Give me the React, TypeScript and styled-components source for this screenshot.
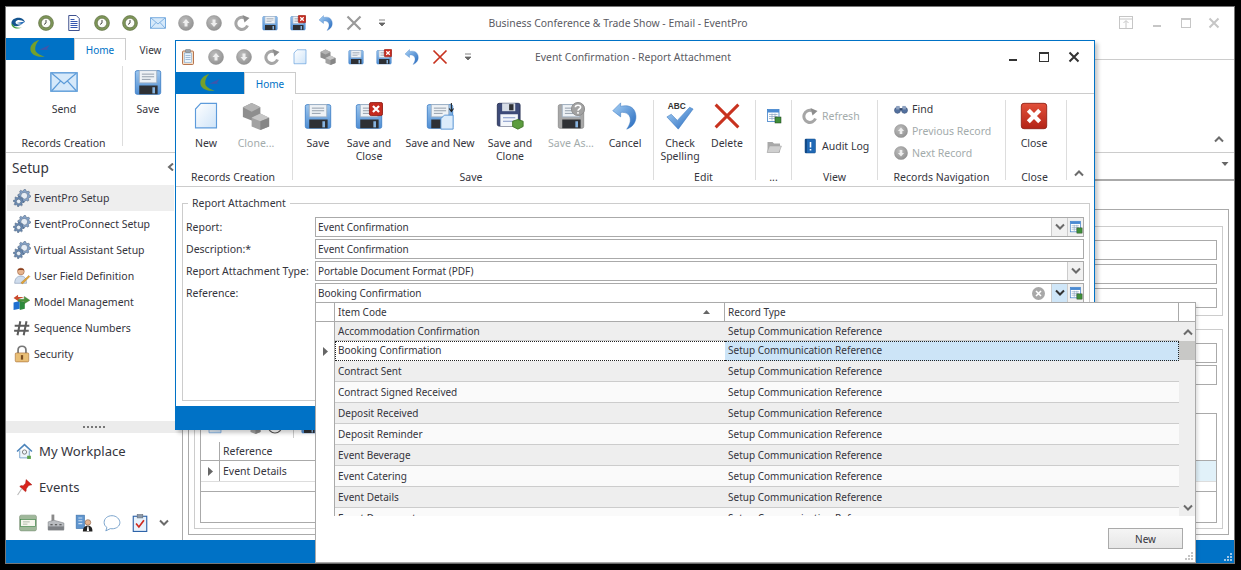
import React from "react";
import styled, { createGlobalStyle } from "styled-components";

const BLUE = "#0072c6";
const INK = "#35353d";
const MUTED = "#a3abab";

const GlobalStyle = createGlobalStyle`
  html, body {
    margin: 0;
    padding: 0;
    background: #000;
  }
  * {
    box-sizing: border-box;
  }
  body {
    font-family: "Noto Sans", "Open Sans", sans-serif;
    font-size: 10.5px;
    color: ${INK};
  }
`;

const Stage = styled.div`
  position: relative;
  width: 1241px;
  height: 570px;
  padding: 6px 6px 6px 5px;
  overflow: hidden;
  background: #000;
`;

const Window = styled.div`
  display: flex;
  flex-direction: column;
  width: 1230px;
  height: 558px;
  border: 1px solid #777;
  background: #fff;
`;

const TitleBar = styled.div`
  display: grid;
  grid-template-columns: 1fr auto 1fr;
  align-items: center;
  flex: none;
  height: 31px;
`;

const QuickAccess = styled.div`
  display: flex;
  align-items: center;
  gap: 12px;
  padding-left: 4px;
`;

const Title = styled.div`
  margin-right: 4px;
  color: #5a5a62;
  font-size: 10.4px;
  white-space: nowrap;
`;

const WindowButtons = styled.div<{ $gap: number; $right: number }>`
  display: flex;
  justify-content: flex-end;
  align-items: center;
  gap: ${({ $gap }) => $gap}px;
  padding-right: ${({ $right }) => $right}px;
`;

const PinSlot = styled.div`
  display: flex;
  margin-right: 3px;
`;

const TabRow = styled.div`
  display: flex;
  flex: none;
  height: 22px;
  border-bottom: 1px solid #ccc;
`;

const AppButton = styled.div`
  display: flex;
  align-items: center;
  justify-content: center;
  width: 68px;
  height: 22px;
  background: ${BLUE};
`;

const Tab = styled.div<{ $active?: boolean; $width: number }>`
  display: flex;
  align-items: center;
  justify-content: center;
  width: ${({ $width }) => $width}px;
  height: 22px;
  color: ${({ $active }) => ($active ? BLUE : INK)};
  background: #fff;
  border: 1px solid ${({ $active }) => ($active ? "#ccc" : "transparent")};
  border-bottom: 0;
  font-size: 10px;
`;

const Ribbon = styled.div`
  display: flex;
  flex: none;
  height: 93px;
  border-bottom: 1px solid #ccc;
`;

const Group = styled.div<{ $width: number; $last?: boolean }>`
  display: flex;
  flex-direction: column;
  flex: none;
  width: ${({ $width }) => $width}px;
  height: 80px;
  margin-top: 6px;
  padding-top: 2px;
  border-right: 1px solid ${({ $last }) => ($last ? "transparent" : "#ddd")};
`;

const GroupBody = styled.div<{ $left?: number }>`
  display: flex;
  flex: 1;
  min-height: 0;
  padding-left: ${({ $left }) => $left ?? 0}px;
`;

const GroupCaption = styled.div<{ $right?: number }>`
  margin-bottom: -4px;
  padding-right: ${({ $right }) => $right ?? 0}px;
  text-align: center;
  line-height: 14px;
  white-space: nowrap;
`;

const LargeButton = styled.div<{ $width: number; $disabled?: boolean }>`
  display: flex;
  flex-direction: column;
  align-items: center;
  flex: none;
  width: ${({ $width }) => $width}px;
  color: ${({ $disabled }) => ($disabled ? MUTED : INK)};
  line-height: 13px;
  text-align: center;
  white-space: nowrap;
`;

const LargeLabel = styled.div`
  margin-top: 7px;
`;

const SmallStack = styled.div<{ $rowHeight: number; $left: number; $gap: number }>`
  display: flex;
  flex-direction: column;
  justify-content: center;
  height: 58px;
  padding-left: ${({ $left }) => $left}px;

  & > div {
    display: flex;
    align-items: center;
    flex: none;
    gap: ${({ $gap }) => $gap}px;
    height: ${({ $rowHeight }) => $rowHeight}px;
    white-space: nowrap;
  }
`;

const SmallLabel = styled.span<{ $disabled?: boolean }>`
  color: ${({ $disabled }) => ($disabled ? MUTED : INK)};
`;

const CollapseSlot = styled.div<{ $right: number }>`
  display: flex;
  align-items: flex-end;
  justify-content: flex-end;
  flex: 1;
  height: 86px;
  padding: 0 ${({ $right }) => $right}px 3px 0;
`;

const Body = styled.div`
  display: flex;
  flex: 1;
  min-height: 0;
`;

const Sidebar = styled.div`
  display: flex;
  flex-direction: column;
  flex: none;
  width: 177px;
  border-right: 1px solid #aaa;
`;

const SidebarHeader = styled.div`
  display: flex;
  align-items: center;
  justify-content: space-between;
  height: 30px;
  padding: 0 6px 2px;
  font-size: 13.6px;
`;

const NavList = styled.div`
  flex: 1;
  padding-top: 2px;
`;

const NavItem = styled.div<{ $active?: boolean }>`
  display: flex;
  align-items: center;
  gap: 3px;
  width: 167px;
  height: 26px;
  margin-left: 1px;
  padding-left: 6px;
  background: ${({ $active }) => ($active ? "#eee" : "transparent")};
`;

const Splitter = styled.div`
  display: flex;
  align-items: center;
  justify-content: center;
  gap: 2px;
  height: 12px;
  background: #ececec;

  & > i {
    width: 2px;
    height: 2px;
    background: #777;
  }
`;

const BigNav = styled.div`
  display: flex;
  align-items: center;
  gap: 6px;
  height: 36px;
  padding-left: 10px;
  font-size: 13.1px;
`;

const ShortcutBar = styled.div`
  display: flex;
  align-items: center;
  gap: 10px;
  height: 35px;
  padding-left: 13px;
`;

const Content = styled.div`
  display: flex;
  flex-direction: column;
  flex: 1;
  min-width: 0;
`;

const ContentStrip = styled.div`
  display: flex;
  align-items: center;
  justify-content: flex-end;
  flex: none;
  height: 28px;
  padding: 0 5px 4px 0;
  border-bottom: 2px solid #aaa;
`;

const ContentArea = styled.div`
  flex: 1;
  min-height: 0;
  padding: 28px 5px 5px;
  display: flex;
`;

const OuterFrame = styled.div`
  display: flex;
  flex-direction: column;
  flex: 1;
  gap: 13px;
  padding: 16px 5px 5px;
  border: 1px solid #aaa;
`;

const UpperFrame = styled.div`
  display: flex;
  flex-direction: column;
  flex: none;
  gap: 4px;
  height: 90px;
  padding: 13px 5px 0;
  border: 1px solid #ccc;
`;

const LowerFrame = styled.div`
  display: flex;
  flex-direction: column;
  flex: 1;
  gap: 2px;
  padding: 13px 5px 5px;
  border: 1px solid #ccc;
`;

const BackField = styled.div`
  flex: none;
  height: 20px;
  border: 1px solid #aaa;
  background: #fff;
`;

const GridBox = styled.div`
  display: flex;
  flex-direction: column;
  flex: none;
  height: 110px;
  margin-top: auto;
  border: 1px solid #aaa;
`;

const GridToolbar = styled.div`
  display: flex;
  align-items: flex-start;
  flex: none;
  height: 28px;
  padding: 4px 0 0 6px;

  & > svg:nth-child(2) {
    margin-left: 22px;
  }
  & > svg:nth-child(3) {
    margin-left: 6px;
  }
`;

const GridToolbarRule = styled.span`
  width: 1px;
  height: 20px;
  margin: 0 7px 0 10px;
  background: #ccc;
`;

const GridLine = styled.div<{ $height: number; $rule: string }>`
  display: flex;
  flex: none;
  height: ${({ $height }) => $height}px;
  border-bottom: 1px solid ${({ $rule }) => $rule};
`;

const Indicator = styled.div<{ $width: number }>`
  display: flex;
  align-items: center;
  justify-content: center;
  flex: none;
  width: ${({ $width }) => $width}px;
  border-right: 1px solid #aaa;
`;

const GridCell = styled.div<{ $width?: number; $tint?: string }>`
  display: flex;
  align-items: center;
  flex: ${({ $width }) => ($width ? "none" : 1)};
  width: ${({ $width }) => ($width ? `${$width}px` : "auto")};
  padding-left: 3px;
  background: ${({ $tint }) => $tint ?? "transparent"};
`;

const BlankArea = styled.div<{ $height: number }>`
  flex: none;
  height: ${({ $height }) => $height}px;
  border-bottom: 1px solid #aaa;
`;

const Footer = styled.div`
  position: relative;
  flex: none;
  height: 23px;
  background: ${BLUE};
`;

const Grip = styled.svg`
  position: absolute;
  right: 1px;
  bottom: 1px;
`;

const Dialog = styled.div`
  position: absolute;
  left: 175px;
  top: 40px;
  display: flex;
  flex-direction: column;
  width: 920px;
  height: 390px;
  border: 1px solid ${BLUE};
  background: #fff;
  box-shadow: 3px 3px 4px rgba(0, 0, 0, 0.22);
`;

const DialogBody = styled.div`
  display: flex;
  flex: 1;
  min-height: 0;
  padding: 9px 4px 5px 6px;
`;

const FieldSet = styled.fieldset`
  flex: 1;
  min-width: 0;
  margin: 0;
  padding: 0 5px 0 3px;
  border: 1px solid #ccc;
`;

const Legend = styled.legend`
  margin-left: 2px;
  padding: 0 4px;
  line-height: 14px;
`;

const Form = styled.div`
  display: flex;
  flex-direction: column;
  gap: 2px;
  margin-top: 7px;
`;

const FormRow = styled.div`
  display: grid;
  grid-template-columns: 129px 1fr;
  align-items: center;
  height: 20px;
`;

const FormLabel = styled.label`
  white-space: nowrap;
`;

const Field = styled.div`
  display: flex;
  align-items: stretch;
  height: 20px;
  border: 1px solid #aaa;
  background: #fff;
  font-size: 10px;
`;

const FieldText = styled.div`
  flex: 1;
  padding-left: 2px;
  line-height: 18px;
`;

const FieldButton = styled.div<{ $active?: boolean }>`
  display: flex;
  align-items: center;
  justify-content: center;
  width: 16px;
  border-left: 1px solid #ccc;
  background: ${({ $active }) => ($active ? "#cfe6f8" : "#f1f1f1")};
`;

const ClearSlot = styled.div`
  display: flex;
  align-items: center;
  width: 19px;
`;

const Popup = styled.div`
  position: absolute;
  left: 315px;
  top: 302px;
  display: flex;
  flex-direction: column;
  width: 881px;
  height: 261px;
  border: 1px solid #aaa;
  background: #fff;
  box-shadow: 2px 2px 3px rgba(0, 0, 0, 0.12);
  font-size: 10px;
`;

const PopupHeader = styled.div`
  display: grid;
  grid-template-columns: 19px 390px 454px 16px;
  flex: none;
  height: 19px;
  border-bottom: 1px solid #aaa;
`;

const HeaderCell = styled.div`
  display: flex;
  align-items: center;
  justify-content: space-between;
  padding: 0 13px 1px 3px;
  border-right: 1px solid #aaa;
`;

const PopupBody = styled.div`
  display: flex;
  flex: none;
  height: 194px;
  overflow: hidden;
`;

const Rows = styled.div`
  flex: none;
  width: 863px;
`;

const Row = styled.div<{ $height: number; $even?: boolean }>`
  display: grid;
  grid-template-columns: 19px 390px 454px;
  height: ${({ $height }) => $height}px;

  & > div + div {
    background: ${({ $even }) => ($even ? "#fafafa" : "#eee")};
    border-bottom: 1px solid #ccc;
  }
`;

const RowMark = styled.div`
  display: flex;
  align-items: center;
  justify-content: center;
  border-right: 1px solid #aaa;
`;

const RowCell = styled.div`
  display: flex;
  align-items: center;
  padding: 0 0 1px 3px;
  white-space: nowrap;
`;

const SelectedRow = styled(Row)`
  & > div + div {
    border: 1px dotted #222;
    padding-bottom: 2px;
  }
  & > div:nth-child(2) {
    background: #fff;
    border-right: 0;
    padding-left: 2px;
  }
  & > div:nth-child(3) {
    background: #cce4f7;
    border-left: 0;
    padding-left: 3px;
  }
`;

const ScrollRail = styled.div`
  display: flex;
  flex-direction: column;
  align-items: center;
  flex: none;
  width: 17px;
  background: #eee;
`;

const ScrollEnd = styled.div<{ $height: number }>`
  display: flex;
  align-items: center;
  justify-content: center;
  height: ${({ $height }) => $height}px;
`;

const ScrollThumb = styled.div`
  width: 100%;
  height: 19px;
  background: #c8c8c6;
`;

const ScrollSpace = styled.div`
  flex: 1;
`;

const PopupFooter = styled.div`
  position: relative;
  display: flex;
  justify-content: flex-end;
  flex: 1;
  padding: 12px 12px 0 0;
`;

const PlainButton = styled.div`
  display: flex;
  align-items: center;
  justify-content: center;
  width: 75px;
  height: 21px;
  border: 1px solid #aaa;
  background: linear-gradient(#f5f5f5, #e6e6e6);
`;

const Defs = styled.svg`
  position: absolute;
  width: 0;
  height: 0;
`;

const Floppy = ({ tone = "url(#fl)", edge = "#3f7fc6" }: { tone?: string; edge?: string }) => (
  <>
    <rect x="1.5" y="3" width="29" height="27" rx="2" fill={tone} stroke={edge} />
    <rect x="6" y="3" width="20" height="14" fill="#eef2f6" stroke="#9fb0c2" />
    <path d="M9 7h14M9 10h14M9 13h10" stroke="#8792a0" strokeWidth="1" />
    <rect x="6" y="20" width="21" height="10" fill="#2e3034" />
    <rect x="21" y="22" width="3" height="7" fill="#86b3df" />
  </>
);

const CloseBadge = () => (
  <>
    <rect x="16.5" y="0.5" width="15" height="15" rx="2" fill="#c52a1e" stroke="#8e1c13" />
    <path d="M20.5 4.5l7 7M27.5 4.5l-7 7" stroke="#fff" strokeWidth="2.6" />
  </>
);

const gearPath = (cx: number, cy: number, outer: number, inner: number, teeth: number) => {
  const points: string[] = [];
  const step = (Math.PI * 2) / (teeth * 4);
  for (let i = 0; i < teeth * 4; i++) {
    const r = i % 4 < 2 ? outer : inner;
    const x = cx + r * Math.cos(i * step);
    const y = cy + r * Math.sin(i * step);
    points.push(`${x.toFixed(1)} ${y.toFixed(1)}`);
  }
  return `M${points.join("L")}Z`;
};

const Gear = ({ cx, cy, r, fill }: { cx: number; cy: number; r: number; fill: string }) => (
  <>
    <path d={gearPath(cx, cy, r, r - 2.6, 8)} fill={fill} stroke="#3b506c" strokeWidth=".8" />
    <circle cx={cx} cy={cy} r={r - 5.5} fill="#e6edf5" stroke="#3b506c" strokeWidth=".8" />
  </>
);

const glyphs: Record<string, React.ReactNode> = {
  brand: (
    <>
      <path d="M3 17C2 9 12 4 21 6c4 1 8 4 9 9-6-5-13-6-17-4 2-2 5-2 7-1-6-1-11 3-8 7 2 2 6 3 12 1-5 5-19 7-21-1z" fill="#15558f" />
      <path d="M3 17c-1 8 10 13 21 8-8 1-14 0-17-4-1-1-2-3-4-4z" fill="#3f9a3a" />
      <path d="M13 16l17-3-6 5z" fill="#1c66b5" />
    </>
  ),
  logo: (
    <>
      <path d="M15 3C7 5 2 10 2 16c0 8 10 13 21 11C15 25 9 21 9 16c0-5 2-9 6-13z" fill="#74a02c" />
      <path d="M15 17l15-7-4 6 3 1z" fill="#3f55ab" />
    </>
  ),
  clock: (
    <>
      <circle cx="16" cy="16" r="15" fill="#7d9558" stroke="#505f34" />
      <circle cx="16" cy="16" r="9.5" fill="#fbfcf8" stroke="#47512f" />
      <path d="M16 10v6l-4 3" fill="none" stroke="#333" strokeWidth="1.8" />
    </>
  ),
  history: (
    <>
      <circle cx="16" cy="16" r="14" fill="#fff" stroke="#555" strokeWidth="2.4" />
      <path d="M16 8v8l-4 4" fill="none" stroke="#555" strokeWidth="2.4" />
    </>
  ),
  doc: (
    <>
      <path d="M5.5 1h15l6 6v24h-21z" fill="#fff" stroke="#2b3f82" strokeWidth="1.8" />
      <path d="M9 9h8M9 13h14M9 17h14M9 21h14M9 25h14" stroke="#3557b0" strokeWidth="2" />
    </>
  ),
  mail: (
    <>
      <rect x="1" y="5.5" width="30" height="21" fill="#d6e9fa" stroke="#5c9bd8" strokeWidth="1.6" />
      <path d="M2 6l14 12L30 6M2 26l10-11M30 26L20 15" fill="none" stroke="#5c9bd8" strokeWidth="1.4" />
    </>
  ),
  up: (
    <>
      <circle cx="16" cy="16" r="15" fill="url(#grayball)" stroke="#8f8f8f" />
      <path d="M16 8l7 8h-4v7h-6v-7H9z" fill="#eee" />
    </>
  ),
  down: (
    <>
      <circle cx="16" cy="16" r="15" fill="url(#grayball)" stroke="#8f8f8f" />
      <path d="M16 24l7-8h-4V9h-6v7H9z" fill="#eee" />
    </>
  ),
  refresh: (
    <>
      <path d="M27 21A12 12 0 1 1 20 5.5" fill="none" stroke="#a6a6a6" strokeWidth="6" />
      <path d="M17 0l14 6-10 9z" fill="#8d8d8d" />
    </>
  ),
  save: <Floppy />,
  saveClose: (
    <>
      <Floppy />
      <CloseBadge />
    </>
  ),
  saveNew: (
    <>
      <Floppy />
      <path d="M21 15h10v16H17V19z" fill="#dcecfb" stroke="#4d8fd2" />
      <path d="M29 1v9M26.5 7.5l2.5 3.5 2.5-3.5" fill="none" stroke="#222" strokeWidth="1.2" />
    </>
  ),
  saveClone: (
    <>
      <rect x="1.5" y="1.5" width="26" height="26" rx="2" fill="#3d4a78" stroke="#283154" />
      <rect x="7" y="1.5" width="15" height="9" fill="#d7dde6" />
      <rect x="15" y="2.5" width="5" height="7" fill="#2e3034" />
      <rect x="5" y="14" width="20" height="13.5" fill="#f3f6fa" />
      <path d="M8 18h14M8 22h14" stroke="#6f86c0" />
      <path d="M19 22l6-2 6 2v6l-6 3-6-3z" fill="#5c9c3f" stroke="#3f7427" />
    </>
  ),
  saveAs: (
    <>
      <Floppy tone="#a8a8a8" edge="#8e8e8e" />
      <circle cx="24" cy="8" r="7.5" fill="#a2a2a2" stroke="#888" />
      <path d="M21 6c0-3 6-3 6 0 0 2-3 2-3 4M24 11.5v2" fill="none" stroke="#fff" strokeWidth="1.8" />
    </>
  ),
  undo: (
    <path d="M11 1L2 10l9 7v-5c7-1 12 3 11 10-.4 3-2 6-4 9 8-3 12-10 10-18C26 5 19 3 11 5z" fill="url(#undo)" stroke="#3a78c2" strokeWidth=".6" />
  ),
  xRed: <path d="M3 3l26 26M29 3L3 29" stroke="#c8321f" strokeWidth="3.4" />,
  xGray: <path d="M3 3l26 26M29 3L3 29" stroke="#9a9a9a" strokeWidth="4.4" />,
  clipboard: (
    <>
      <rect x="5" y="4" width="22" height="27" rx="2" fill="#f4ddc6" stroke="#a4562a" strokeWidth="1.6" />
      <rect x="9" y="8" width="14" height="19" fill="#e8f3fc" stroke="#6a9ed2" />
      <rect x="11" y="1" width="10" height="6" rx="1" fill="#9aa3ac" stroke="#6d747b" />
      <path d="M11 13h10M11 17h10M11 21h10" stroke="#5d87b6" />
    </>
  ),
  newDoc: <path d="M10 1.5h18v28H4V8z" fill="url(#paper)" stroke="#5d9bdb" strokeWidth="1.3" />,
  clone: (
    <>
      <path d="M1 6l10-5 10 5v11l-10 4-10-4z" fill="#8e8e8e" />
      <path d="M11 11L1 6l10-5 10 5z" fill="#b4b4b4" />
      <path d="M11 18l10-5 10 5v10l-10 4-10-4z" fill="#a2a2a2" />
      <path d="M21 22l-10-4 10-5 10 5z" fill="#c6c6c6" />
      <path d="M21 22v10l10-4V18z" fill="#868686" />
    </>
  ),
  check: (
    <>
      <text x="2" y="8" fontFamily="Liberation Sans, sans-serif" fontWeight="700" fontSize="9.5" fill="#333">ABC</text>
      <path d="M1 17l5-3 7 7L27 6l4 2-17 23z" fill="url(#undo)" stroke="#3a78c2" strokeWidth=".6" />
    </>
  ),
  closeBig: (
    <>
      <rect x="1.5" y="1.5" width="29" height="29" rx="3" fill="url(#redbox)" stroke="#8f1f15" />
      <path d="M9.5 9.5l13 13M22.5 9.5l-13 13" stroke="#fff" strokeWidth="4.8" />
    </>
  ),
  table: (
    <>
      <rect x="3" y="3" width="23" height="24" fill="#fff" stroke="#3e7fc8" strokeWidth="1.6" />
      <rect x="3" y="3" width="23" height="6" fill="#4a8ad2" />
      <path d="M6 13h17M6 17h17M6 21h17M12 11v14M18 11v14" stroke="#8aa4c0" strokeWidth="1.4" />
      <rect x="18" y="18" width="12" height="12" fill="#3f8f3a" stroke="#1e3d1a" />
    </>
  ),
  folder: (
    <>
      <path d="M3 8h10l3 3h12v18H3z" fill="#a9a9a9" />
      <path d="M2 29l5-13h24l-5 13z" fill="#cfcfcf" stroke="#a0a0a0" />
    </>
  ),
  audit: (
    <>
      <rect x="6" y="2" width="21" height="28" rx="2" fill="#1f68b5" stroke="#134a86" />
      <rect x="6" y="2" width="4" height="28" fill="#134a86" />
      <path d="M17 8v11" stroke="#fff" strokeWidth="3.2" />
      <path d="M17 22v3" stroke="#fff" strokeWidth="3.2" />
    </>
  ),
  binoculars: (
    <>
      <circle cx="8" cy="19" r="7" fill="#53709e" stroke="#34496e" />
      <circle cx="24" cy="19" r="7" fill="#53709e" stroke="#34496e" />
      <rect x="5" y="9" width="8" height="8" fill="#8da1c0" />
      <rect x="19" y="9" width="8" height="8" fill="#8da1c0" />
      <rect x="13" y="14" width="6" height="5" fill="#34496e" />
    </>
  ),
  gears: (
    <>
      <Gear cx={20} cy={12} r={11.5} fill="#86a3c8" />
      <Gear cx={10} cy={22} r={9.5} fill="#6a8ab2" />
    </>
  ),
  user: (
    <>
      <circle cx="14" cy="8" r="6" fill="#e6b48e" stroke="#9b5f3a" />
      <path d="M8 6c1-5 11-5 12 0-4-1-8-1-12 0z" fill="#8a3f1f" />
      <path d="M3 29c0-9 5-13 11-13s10 4 10 13z" fill="#cfdcec" stroke="#7d93ae" />
      <path d="M14 28l14-13 2 2-13 13z" fill="#e2a53a" stroke="#a8721d" strokeWidth=".7" />
    </>
  ),
  model: (
    <>
      <path d="M1 17l11-3v14L1 30z" fill="#1f6fd0" />
      <path d="M12 14l9 2v12l-9 2z" fill="#2d8a3c" />
      <path d="M9 11h11V6l10 7-10 6v-4H9z" fill="#49933a" stroke="#2c6122" strokeWidth=".6" />
      <path d="M20 7H9V3L1 9l8 5v-3" fill="#ca4a2c" />
    </>
  ),
  hash: <path d="M13 4L8 29M24 4l-5 25M3 12h26M2 21h26" stroke="#5c5c5c" strokeWidth="3.6" />,
  lock: (
    <>
      <path d="M9 15V9c0-9 14-9 14 0v6" fill="none" stroke="#777" strokeWidth="3" />
      <rect x="4" y="14" width="24" height="16" rx="2" fill="#e9bf77" stroke="#a1642a" />
      <rect x="14" y="18" width="4" height="8" fill="#7a4d22" />
    </>
  ),
  home: (
    <>
      <path d="M2 16L16 3l14 13" fill="none" stroke="#4c84bb" strokeWidth="3" />
      <path d="M7 14v14h18V14" fill="#eef5fb" stroke="#6a9ac7" strokeWidth="1.6" />
      <circle cx="16" cy="17" r="4" fill="none" stroke="#5d5d5d" strokeWidth="1.4" />
      <rect x="21" y="24" width="7" height="6" fill="#5aa24a" />
    </>
  ),
  pin: (
    <>
      <path d="M19 1l11 10-6 1-5 7c1 2 0 4-1 5L7 14c2-2 4-2 6-1l5-5z" fill="#d8231c" stroke="#9a1610" strokeWidth=".8" />
      <path d="M11 18L3 30" stroke="#b9b9b9" strokeWidth="2" />
    </>
  ),
  card: (
    <>
      <rect x="1" y="2" width="30" height="28" rx="3" fill="#9fb89a" stroke="#7a8f76" />
      <rect x="3" y="10" width="26" height="12" fill="#f6f6ee" stroke="#2f7a3a" />
      <path d="M7 14h12M7 18h8" stroke="#7a8f76" />
    </>
  ),
  factory: (
    <>
      <rect x="8" y="1" width="5" height="14" fill="#8a8a8a" />
      <path d="M2 14l10-3 18 5v12H2z" fill="#b9bcc0" stroke="#7d8084" />
      <rect x="2" y="22" width="28" height="7" fill="#7d8084" />
      <path d="M6 19h4M14 19h4M22 19h4" stroke="#444" strokeWidth="2" />
    </>
  ),
  people: (
    <>
      <rect x="2" y="2" width="15" height="24" fill="#5f95cf" stroke="#3c6ea4" />
      <path d="M6 7h7M6 12h7M6 17h7" stroke="#c9def2" strokeWidth="2" />
      <circle cx="23" cy="15" r="5" fill="#e6b48e" stroke="#80563b" />
      <path d="M14 31c0-7 4-10 9-10s8 3 8 10z" fill="#222" />
      <path d="M22 22h2l1 8h-4z" fill="#fff" />
    </>
  ),
  bubble: (
    <path d="M16 3C8 3 2 8 2 15c0 4 2 7 5 9l-2 6 8-4c1 .3 2 .3 3 .3 8 0 14-5 14-11S24 3 16 3z" fill="#fff" stroke="#6e9bc7" strokeWidth="1.6" />
  ),
  todo: (
    <>
      <rect x="4" y="4" width="24" height="27" fill="#e8f2fc" stroke="#2e63a8" strokeWidth="2" />
      <rect x="11" y="1" width="10" height="6" fill="#8d99a8" stroke="#5e6977" />
      <path d="M9 17l5 6 9-12" fill="none" stroke="#cf2a20" strokeWidth="3" />
    </>
  ),
};

const Icon = ({ name, size = 16 }: { name: string; size?: number }) => (
  <svg width={size} height={size} viewBox="0 0 32 32" style={{ flex: "none" }}>
    {glyphs[name]}
  </svg>
);

const chevronPaths = {
  up: "M1 6.5l4-4 4 4",
  down: "M1 1.5l4 4 4-4",
  left: "M7 0.5l-4 3.5 4 3.5",
};

const Chevron = ({ dir = "down", color = "#6b6b6b" }: { dir?: keyof typeof chevronPaths; color?: string }) => (
  <svg width="10" height="8" viewBox="0 0 10 8">
    <path d={chevronPaths[dir]} fill="none" stroke={color} strokeWidth="2" />
  </svg>
);

const Caret = ({ width = 7, up }: { width?: number; up?: boolean }) => (
  <svg width={width} height="6" viewBox="0 0 7 6">
    <path d={up ? "M0 5h7L3.5 1z" : "M0 1h7L3.5 5z"} fill="#666" />
  </svg>
);

const QuickCaret = () => (
  <svg width="16" height="16" viewBox="0 0 16 16">
    <path d="M5 5h6M5 8h6l-3 3z" fill="#666" stroke="#666" strokeWidth=".8" />
  </svg>
);

const RowArrow = () => (
  <svg width="5" height="9" viewBox="0 0 5 9">
    <path d="M0 0l5 4.5L0 9z" fill="#666" />
  </svg>
);

const CtlMin = ({ c }: { c: string }) => (
  <svg width="12" height="12" viewBox="0 0 12 12">
    <rect x="1" y="8" width="8" height="2" fill={c} />
  </svg>
);

const CtlMax = ({ c }: { c: string }) => (
  <svg width="12" height="12" viewBox="0 0 12 12">
    <rect x="1.5" y="1.5" width="9" height="9" fill="none" stroke={c} />
    <rect x="1" y="1" width="10" height="2" fill={c} />
  </svg>
);

const CtlClose = ({ c }: { c: string }) => (
  <svg width="12" height="12" viewBox="0 0 12 12">
    <path d="M1.5 1.5l9 9M10.5 1.5l-9 9" stroke={c} strokeWidth="2" />
  </svg>
);

const CtlPin = ({ c }: { c: string }) => (
  <svg width="14" height="13" viewBox="0 0 14 13">
    <rect x=".5" y=".5" width="13" height="12" fill="none" stroke={c} />
    <path d="M1 3h12M7 12V5M4.5 7L7 4.5 9.5 7" fill="none" stroke={c} />
  </svg>
);

const GripDots = ({ color }: { color: string }) => (
  <Grip width="9" height="9" viewBox="0 0 9 9">
    <path d="M6 0h2v2H6zM3 3h2v2H3zM6 3h2v2H6zM0 6h2v2H0zM3 6h2v2H3zM6 6h2v2H6z" fill={color} />
  </Grip>
);

const mainQuick = ["brand", "clock", "doc", "clock", "clock", "mail", "up", "down", "refresh", "save", "saveClose", "undo", "xGray"];
const dialogQuick = ["clipboard", "up", "down", "refresh", "newDoc", "clone", "save", "saveClose", "undo", "xRed"];

const setupItems = [
  { icon: "gears", label: "EventPro Setup", active: true },
  { icon: "gears", label: "EventProConnect Setup" },
  { icon: "gears", label: "Virtual Assistant Setup" },
  { icon: "user", label: "User Field Definition" },
  { icon: "model", label: "Model Management" },
  { icon: "hash", label: "Sequence Numbers" },
  { icon: "lock", label: "Security" },
];

const pickRows = [
  "Contract Sent",
  "Contract Signed Received",
  "Deposit Received",
  "Deposit Reminder",
  "Event Beverage",
  "Event Catering",
  "Event Details",
  "Event Documents",
];

const RECORD_TYPE = "Setup Communication Reference";

const BigButton = ({ icon, width, lines, disabled }: { icon: string; width: number; lines: string[]; disabled?: boolean }) => (
  <LargeButton $width={width} $disabled={disabled}>
    <Icon name={icon} size={28} />
    <LargeLabel>
      {lines.map((line) => (
        <div key={line}>{line}</div>
      ))}
    </LargeLabel>
  </LargeButton>
);

const DialogRibbon = () => (
  <Ribbon>
    <Group $width={117}>
      <GroupBody $left={5}>
        <BigButton icon="newDoc" width={50} lines={["New"]} />
        <BigButton icon="clone" width={50} lines={["Clone..."]} disabled />
      </GroupBody>
      <GroupCaption $right={2}>Records Creation</GroupCaption>
    </Group>
    <Group $width={361}>
      <GroupBody $left={3}>
        <BigButton icon="save" width={44} lines={["Save"]} />
        <BigButton icon="saveClose" width={58} lines={["Save and", "Close"]} />
        <BigButton icon="saveNew" width={84} lines={["Save and New"]} />
        <BigButton icon="saveClone" width={56} lines={["Save and", "Clone"]} />
        <BigButton icon="saveAs" width={66} lines={["Save As..."]} disabled />
        <BigButton icon="undo" width={42} lines={["Cancel"]} />
      </GroupBody>
      <GroupCaption $right={4}>Save</GroupCaption>
    </Group>
    <Group $width={102}>
      <GroupBody $left={1}>
        <BigButton icon="check" width={50} lines={["Check", "Spelling"]} />
        <BigButton icon="xRed" width={44} lines={["Delete"]} />
      </GroupBody>
      <GroupCaption $right={2}>Edit</GroupCaption>
    </Group>
    <Group $width={36}>
      <GroupBody>
        <SmallStack $rowHeight={30} $left={10} $gap={0}>
          <div><Icon name="table" /></div>
          <div><Icon name="folder" /></div>
        </SmallStack>
      </GroupBody>
      <GroupCaption>...</GroupCaption>
    </Group>
    <Group $width={86}>
      <GroupBody>
        <SmallStack $rowHeight={30} $left={10} $gap={4}>
          <div><Icon name="refresh" /><SmallLabel $disabled>Refresh</SmallLabel></div>
          <div><Icon name="audit" /><SmallLabel>Audit Log</SmallLabel></div>
        </SmallStack>
      </GroupBody>
      <GroupCaption>View</GroupCaption>
    </Group>
    <Group $width={128}>
      <GroupBody>
        <SmallStack $rowHeight={22} $left={16} $gap={4}>
          <div><Icon name="binoculars" size={14} /><SmallLabel>Find</SmallLabel></div>
          <div><Icon name="up" size={14} /><SmallLabel $disabled>Previous Record</SmallLabel></div>
          <div><Icon name="down" size={14} /><SmallLabel $disabled>Next Record</SmallLabel></div>
        </SmallStack>
      </GroupBody>
      <GroupCaption>Records Navigation</GroupCaption>
    </Group>
    <Group $width={61}>
      <GroupBody $left={2}>
        <BigButton icon="closeBig" width={52} lines={["Close"]} />
      </GroupBody>
      <GroupCaption $right={3}>Close</GroupCaption>
    </Group>
    <CollapseSlot $right={10}><Chevron dir="up" /></CollapseSlot>
  </Ribbon>
);

export default function App() {
  return (
    <Stage>
      <GlobalStyle />
      <Defs>
        <defs>
          <linearGradient id="fl" x1="0" y1="0" x2="0" y2="1">
            <stop offset="0" stopColor="#9cc6ee" />
            <stop offset="1" stopColor="#4f8ed4" />
          </linearGradient>
          <linearGradient id="paper" x1="0" y1="0" x2="1" y2="1">
            <stop offset="0" stopColor="#ffffff" />
            <stop offset="1" stopColor="#cfe4f8" />
          </linearGradient>
          <linearGradient id="undo" x1="0" y1="0" x2="1" y2="1">
            <stop offset="0" stopColor="#a9d2f6" />
            <stop offset="1" stopColor="#2468bd" />
          </linearGradient>
          <linearGradient id="redbox" x1="0" y1="0" x2="0" y2="1">
            <stop offset="0" stopColor="#e2503a" />
            <stop offset="1" stopColor="#b32316" />
          </linearGradient>
          <radialGradient id="grayball" cx=".4" cy=".35" r=".8">
            <stop offset="0" stopColor="#bdbdbd" />
            <stop offset="1" stopColor="#8b8b8b" />
          </radialGradient>
        </defs>
      </Defs>

      <Window>
        <TitleBar>
          <QuickAccess>
            {mainQuick.map((name, i) => (
              <Icon key={i} name={name} />
            ))}
            <QuickCaret />
          </QuickAccess>
          <Title>Business Conference &amp; Trade Show - Email - EventPro</Title>
          <WindowButtons $gap={16} $right={14}>
            <PinSlot><CtlPin c="#c6c6c6" /></PinSlot>
            <CtlMin c="#c6c6c6" />
            <CtlMax c="#c6c6c6" />
            <CtlClose c="#c6c6c6" />
          </WindowButtons>
        </TitleBar>
        <TabRow>
          <AppButton><Icon name="logo" size={22} /></AppButton>
          <Tab $active $width={52}>Home</Tab>
          <Tab $width={49}>View</Tab>
        </TabRow>
        <Ribbon>
          <Group $width={117}>
            <GroupBody>
              <BigButton icon="mail" width={116} lines={["Send"]} />
            </GroupBody>
            <GroupCaption $right={1}>Records Creation</GroupCaption>
          </Group>
          <Group $width={50} $last>
            <GroupBody>
              <BigButton icon="save" width={50} lines={["Save"]} />
            </GroupBody>
          </Group>
          <CollapseSlot $right={10}><Chevron dir="up" /></CollapseSlot>
        </Ribbon>
        <Body>
          <Sidebar>
            <SidebarHeader>
              Setup
              <Chevron dir="left" />
            </SidebarHeader>
            <NavList>
              {setupItems.map((item) => (
                <NavItem key={item.label} $active={item.active}>
                  <Icon name={item.icon} size={18} />
                  {item.label}
                </NavItem>
              ))}
            </NavList>
            <Splitter>
              <i /><i /><i /><i /><i /><i />
            </Splitter>
            <BigNav><Icon name="home" size={17} />My Workplace</BigNav>
            <BigNav><Icon name="pin" size={17} />Events</BigNav>
            <ShortcutBar>
              <Icon name="card" size={18} />
              <Icon name="factory" size={18} />
              <Icon name="people" size={18} />
              <Icon name="bubble" size={18} />
              <Icon name="todo" size={18} />
              <Chevron />
            </ShortcutBar>
          </Sidebar>
          <Content>
            <ContentStrip><Caret width={8} /></ContentStrip>
            <ContentArea>
              <OuterFrame>
                <UpperFrame>
                  <BackField />
                  <BackField />
                  <BackField />
                </UpperFrame>
                <LowerFrame>
                  <BackField />
                  <BackField />
                  <GridBox>
                    <GridToolbar>
                      <Icon name="newDoc" />
                      <Icon name="clone" />
                      <Icon name="history" />
                      <GridToolbarRule />
                      <Icon name="save" />
                    </GridToolbar>
                    <GridLine $height={19} $rule="#aaa">
                      <Indicator $width={19} />
                      <GridCell>Reference</GridCell>
                    </GridLine>
                    <GridLine $height={21} $rule="#ddd">
                      <Indicator $width={19}><RowArrow /></Indicator>
                      <GridCell $width={300} $tint="#fff">Event Details</GridCell>
                      <GridCell $tint="#e1f1f9" />
                    </GridLine>
                    <BlankArea $height={10} />
                  </GridBox>
                </LowerFrame>
              </OuterFrame>
            </ContentArea>
          </Content>
        </Body>
        <Footer><GripDots color="#9fc6e6" /></Footer>
      </Window>

      <Dialog>
        <TitleBar>
          <QuickAccess>
            {dialogQuick.map((name, i) => (
              <Icon key={i} name={name} />
            ))}
            <QuickCaret />
          </QuickAccess>
          <Title>Event Confirmation - Report Attachment</Title>
          <WindowButtons $gap={18} $right={14}>
            <CtlMin c="#333" />
            <CtlMax c="#333" />
            <CtlClose c="#333" />
          </WindowButtons>
        </TitleBar>
        <TabRow>
          <AppButton><Icon name="logo" size={22} /></AppButton>
          <Tab $active $width={52}>Home</Tab>
        </TabRow>
        <DialogRibbon />
        <DialogBody>
          <FieldSet>
            <Legend>Report Attachment</Legend>
            <Form>
              <FormRow>
                <FormLabel>Report:</FormLabel>
                <Field>
                  <FieldText>Event Confirmation</FieldText>
                  <FieldButton><Chevron /></FieldButton>
                  <FieldButton><Icon name="table" size={14} /></FieldButton>
                </Field>
              </FormRow>
              <FormRow>
                <FormLabel>Description:*</FormLabel>
                <Field><FieldText>Event Confirmation</FieldText></Field>
              </FormRow>
              <FormRow>
                <FormLabel>Report Attachment Type:</FormLabel>
                <Field>
                  <FieldText>Portable Document Format (PDF)</FieldText>
                  <FieldButton><Chevron /></FieldButton>
                </Field>
              </FormRow>
              <FormRow>
                <FormLabel>Reference:</FormLabel>
                <Field>
                  <FieldText>Booking Confirmation</FieldText>
                  <ClearSlot>
                    <svg width="13" height="13" viewBox="0 0 13 13">
                      <circle cx="6.5" cy="6.5" r="6.5" fill="#a8a8a8" />
                      <path d="M4 4l5 5M9 4l-5 5" stroke="#fff" strokeWidth="1.6" />
                    </svg>
                  </ClearSlot>
                  <FieldButton $active><Chevron color="#333" /></FieldButton>
                  <FieldButton><Icon name="table" size={14} /></FieldButton>
                </Field>
              </FormRow>
            </Form>
          </FieldSet>
        </DialogBody>
        <Footer />
      </Dialog>

      <Popup>
        <PopupHeader>
          <HeaderCell />
          <HeaderCell>
            Item Code
            <Caret width={9} up />
          </HeaderCell>
          <HeaderCell>Record Type</HeaderCell>
        </PopupHeader>
        <PopupBody>
          <Rows>
            <Row $height={19}>
              <RowMark />
              <RowCell>Accommodation Confirmation</RowCell>
              <RowCell>{RECORD_TYPE}</RowCell>
            </Row>
            <SelectedRow $height={20}>
              <RowMark><RowArrow /></RowMark>
              <RowCell>Booking Confirmation</RowCell>
              <RowCell>{RECORD_TYPE}</RowCell>
            </SelectedRow>
            {pickRows.map((label, i) => (
              <Row key={label} $height={21} $even={i % 2 === 1}>
                <RowMark />
                <RowCell>{label}</RowCell>
                <RowCell>{RECORD_TYPE}</RowCell>
              </Row>
            ))}
          </Rows>
          <ScrollRail>
            <ScrollEnd $height={19}><Chevron dir="up" /></ScrollEnd>
            <ScrollThumb />
            <ScrollSpace />
            <ScrollEnd $height={16}><Chevron /></ScrollEnd>
          </ScrollRail>
        </PopupBody>
        <PopupFooter>
          <PlainButton>New</PlainButton>
          <GripDots color="#c4c4c4" />
        </PopupFooter>
      </Popup>
    </Stage>
  );
}
